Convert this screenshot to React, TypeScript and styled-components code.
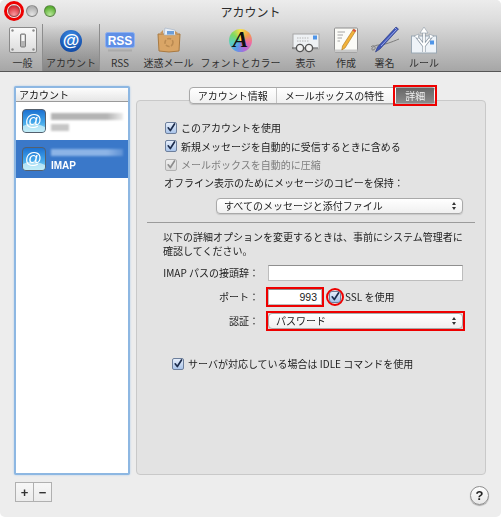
import React from 'react'
import styled, { createGlobalStyle, css } from 'styled-components'

const font = `"Noto Sans CJK JP", "Noto Sans", sans-serif`
const red = '#ee0000'

const Global = createGlobalStyle`
  html, body { margin: 0; padding: 0; background: #fff; }
  body { width: 501px; height: 517px; overflow: hidden; font-family: ${font}; color: #1c1c1c; }
  * { box-sizing: border-box; }
`

// red marker drawn over a control, square even when the control is rounded
const marked = css`
  position: relative;
  &::after {
    content: '';
    position: absolute;
    inset: -3px;
    border: 2.5px solid ${red};
    pointer-events: none;
  }
`

const Window = styled.div`
  width: 501px;
  height: 517px;
  background: #ededed;
  border-radius: 5px;
  overflow: hidden;
  display: flex;
  flex-direction: column;
  filter: blur(0.3px);
`

const Chrome = styled.header`
  height: 72px;
  flex: none;
  background: linear-gradient(#ececec 0%, #dcdcdc 30%, #bdbdbd 70%, #a6a6a6 100%);
  border-bottom: 1px solid #565656;
  display: flex;
  flex-direction: column;
`

const TitleBar = styled.div`
  height: 22px;
  display: flex;
  align-items: center;
  padding-left: 8px;
  gap: 8px;
`

const Title = styled.div`
  flex: 1;
  margin-right: 64px;
  text-align: center;
  font-size: 12px;
  color: #2b2b2b;
`

const Lights = styled.div`
  display: flex;
  gap: 6px;
`

const Light = styled.span<{ $c: string; $glow: string; $ring?: boolean }>`
  width: 12px;
  height: 12px;
  border-radius: 50%;
  border: 1px solid rgba(70, 70, 70, 0.45);
  background: radial-gradient(circle at 50% 85%, ${p => p.$glow} 0%, ${p => p.$c} 75%);
  ${p => p.$ring && `box-shadow: 0 0 0 1px #ededed, 0 0 0 4px ${red};`}
`

const Tools = styled.nav`
  flex: 1;
  margin-top: 2px;
  display: flex;
  padding-left: 3px;
`

const Tool = styled.div<{ $w: number; $active?: boolean }>`
  width: ${p => p.$w}px;
  flex: none;
  display: flex;
  flex-direction: column;
  align-items: center;
  justify-content: flex-start;
  ${p => p.$active && `
    background: linear-gradient(rgba(120,120,120,0) 0%, rgba(120,120,120,.35) 55%, rgba(90,90,90,.45) 100%);
    border-left: 1px solid #8d8d8d;
    border-right: 1px solid #8d8d8d;
  `}
`

const ToolIcon = styled.div<{ $drop?: number }>`
  height: 32px;
  padding-top: ${p => p.$drop ?? 0}px;
  display: flex;
  align-items: center;
  justify-content: center;
`

const ToolLabel = styled.span`
  font-size: 10px;
  line-height: 13px;
  margin-top: 0;
  white-space: nowrap;
  color: #303030;
`

const FontWheel = styled.div`
  width: 23px;
  height: 23px;
  border-radius: 50%;
  background: conic-gradient(#f7e04a, #f3a04a, #ef6aa0, #b06ad8, #5a9ae8, #5ad0c0, #7ed860, #f7e04a);
  display: flex;
  align-items: center;
  justify-content: center;
  font: italic bold 23px "Liberation Serif", serif;
  color: #111;
`

const Body = styled.main`
  flex: 1;
  display: flex;
  gap: 6px;
  padding: 14px 15px 0 14px;
`

const Sidebar = styled.aside`
  width: 116px;
  flex: none;
`

const List = styled.div`
  height: 389px;
  background: #fff;
  border: 2px solid #8db7e2;
  border-radius: 2px;
  box-shadow: 0 0 2px #a8c8ea;
`

const ListHead = styled.div`
  height: 14px;
  font-size: 10px;
  line-height: 13px;
  padding-left: 3px;
  background: linear-gradient(#fdfdfd, #e6e6e6);
  border-bottom: 1px solid #9a9a9a;
  color: #111;
`

const Account = styled.div<{ $selected?: boolean }>`
  height: 38px;
  display: flex;
  align-items: center;
  gap: 5px;
  padding-left: 6px;
  background: ${p => (p.$selected ? '#3a78c9' : '#fff')};
  color: #fff;
`

const AccountText = styled.div`
  display: flex;
  flex-direction: column;
  gap: 4px;
  padding-top: 1px;
`

const Blurred = styled.span<{ $w: number; $c: string; $fade?: string }>`
  display: block;
  width: ${p => p.$w}px;
  height: 7px;
  background: linear-gradient(90deg, ${p => p.$c} 78%, ${p => p.$fade ?? p.$c} 100%);
  filter: blur(1.3px);
`

const Proto = styled.span`
  font: bold 10px/11px "Liberation Sans", sans-serif;
`

const Right = styled.section`
  flex: 1;
  display: flex;
  flex-direction: column;
  align-items: center;
  width: 350px;
`

const Tabs = styled.div`
  position: relative;
  z-index: 1;
  margin-top: 1px;
  margin-left: 3px;
  height: 17px;
  display: flex;
  align-items: stretch;
  background: linear-gradient(#ffffff, #f0f0f0);
  border: 1px solid #a8a8a8;
  border-radius: 4px;
  font-size: 10px;
  line-height: 15px;
  box-shadow: 0 1px 1px rgba(0, 0, 0, 0.15);
`

const Tab = styled.div<{ $selected?: boolean; $sep?: boolean }>`
  padding: 0 ${p => (p.$selected ? 9 : 8)}px;
  ${p => p.$sep && 'border-right: 1px solid #c4c4c4;'}
  ${p => p.$selected && css`
    background: linear-gradient(#666666, #8a8a8a);
    color: #f2f2f2;
    margin-left: 4px;
    margin-right: 1px;
    ${marked}
  `}
`

const Panel = styled.div`
  margin-top: -4px;
  width: 350px;
  height: 375px;
  background: #e3e3e3;
  border: 1px solid #c9c9c9;
  border-radius: 4px;
  padding: 17.5px 10px 0 10px;
  font-size: 10px;
`

const CheckRow = styled.label<{ $dim?: boolean; $indent?: number }>`
  height: 18.5px;
  display: flex;
  align-items: center;
  gap: 4px;
  padding-left: ${p => p.$indent ?? 18}px;
  white-space: nowrap;
  color: ${p => (p.$dim ? '#7d7d7d' : '#1c1c1c')};
`

const Box = styled.span<{ $dim?: boolean }>`
  width: 12px;
  height: 12px;
  flex: none;
  border-radius: 2px;
  border: 1px solid ${p => (p.$dim ? '#b0b0b0' : '#6d7f9c')};
  background: ${p =>
    p.$dim ? 'linear-gradient(#eee,#d8d8d8)' : 'linear-gradient(#e6eefa,#a9c4ea)'};
  display: flex;
  align-items: center;
  justify-content: center;
`

const Line = styled.div`
  height: 18px;
  line-height: 18px;
  margin-bottom: 5.5px;
  padding-left: 17px;
  white-space: nowrap;
`

const Popup = styled.div<{ $w: number; $ml?: number; $hl?: boolean }>`
  width: ${p => p.$w}px;
  margin-left: ${p => p.$ml ?? 0}px;
  height: 16px;
  flex: none;
  display: flex;
  align-items: center;
  justify-content: space-between;
  padding: 0 6px 0 7px;
  background: linear-gradient(#ffffff, #f0f0f0);
  border: 1px solid #a9a9a9;
  border-radius: 4px;
  box-shadow: 0 1px 1px rgba(0, 0, 0, 0.12);
  ${p => p.$hl && marked}
`

const Arrows = styled.span`
  display: flex;
  flex-direction: column;
  gap: 2px;
  &::before, &::after {
    content: '';
    width: 0;
    height: 0;
    border-left: 2px solid transparent;
    border-right: 2px solid transparent;
  }
  &::before { border-bottom: 3px solid #333; }
  &::after { border-top: 3px solid #333; }
`

const Divider = styled.hr`
  margin: 8px 0 7px;
  border: 0;
  border-top: 1px solid #9b9b9b;
`

const Note = styled.p`
  margin: 0 0 7px;
  padding-left: 16px;
  line-height: 14px;
  white-space: nowrap;
`

const FieldGrid = styled.div`
  display: grid;
  grid-template-columns: 112px 1fr;
  column-gap: 9px;
  row-gap: 8px;
  align-items: center;
`

const FieldLabel = styled.div`
  text-align: right;
  white-space: nowrap;
`

const FieldRow = styled.div`
  display: flex;
  align-items: center;
  gap: 6px;
`

const Input = styled.div<{ $w: number; $hl?: boolean }>`
  width: ${p => p.$w}px;
  height: 16px;
  background: #fff;
  border: 1px solid #bdbdbd;
  border-top-color: #8f8f8f;
  text-align: right;
  padding-right: 4px;
  font: 10.5px/15px "Liberation Sans", sans-serif;
  ${p => p.$hl && marked}
`

const SslBox = styled(Box)`
  position: relative;
  border-radius: 3px;
  &::after {
    content: '';
    position: absolute;
    inset: -4px;
    border: 2px solid ${red};
    border-radius: 50%;
  }
`

const Ssl = styled.span`
  display: flex;
  align-items: center;
  gap: 4px;
  margin-left: 1px;
  white-space: nowrap;
`

const Idle = styled.div`
  margin-top: 26px;
`

const Foot = styled.footer`
  flex: 1;
  display: flex;
  align-items: flex-start;
  justify-content: space-between;
  padding: 7px 12px 0 15px;
`

const PlusMinus = styled.div`
  display: flex;
  width: 37px;
  height: 20px;
  border: 1px solid #b0b0b0;
  background: linear-gradient(#f7f7f7, #ececec);
`

const Sign = styled.span<{ $sep?: boolean }>`
  flex: 1;
  display: flex;
  align-items: center;
  justify-content: center;
  font: bold 13px/1 "Liberation Sans", sans-serif;
  color: #333;
  ${p => p.$sep && 'border-right: 1px solid #b0b0b0;'}
`

const Help = styled.span`
  width: 19px;
  height: 19px;
  margin-top: 4px;
  border-radius: 50%;
  border: 1px solid #8c8c8c;
  background: linear-gradient(#fdfdfd, #e8e8e8);
  box-shadow: 0 1px 1px rgba(0, 0, 0, 0.3);
  display: flex;
  align-items: center;
  justify-content: center;
  font: bold 13px/1 "Liberation Sans", sans-serif;
  color: #222;
`

const Tick = ({ dim }: { dim?: boolean }) => (
  <svg width="12" height="12" viewBox="0 0 12 12">
    <path
      d="M2.6 5.8 L5.2 9 L10.2 1.2"
      fill="none"
      stroke={dim ? '#8d8d8d' : '#1c2c4c'}
      strokeWidth="2"
      strokeLinecap="round"
      strokeLinejoin="round"
    />
  </svg>
)

const SwitchIcon = () => (
  <svg width="28" height="26" viewBox="0 0 28 26">
    <defs>
      <linearGradient id="sw" x1="0" y1="0" x2="0" y2="1">
        <stop offset="0" stopColor="#fbfbfb" />
        <stop offset="1" stopColor="#dcdcdc" />
      </linearGradient>
    </defs>
    <rect x=".5" y=".5" width="27" height="25" rx="1.5" fill="url(#sw)" stroke="#8a8a8a" />
    {[[3.5, 3.5], [24.5, 3.5], [3.5, 22.5], [24.5, 22.5]].map(([x, y]) => (
      <circle key={`${x}-${y}`} cx={x} cy={y} r="1.2" fill="#8c8c8c" />
    ))}
    <rect x="11.5" y="7" width="5" height="13" rx="1" fill="#b4b4b4" stroke="#7c7c7c" />
    <rect x="12.5" y="8" width="3" height="6" rx=".5" fill="#f6f6f6" />
  </svg>
)

const AtIcon = () => (
  <svg width="26" height="28" viewBox="0 0 26 28">
    <defs>
      <radialGradient id="at" cx=".5" cy=".3" r=".8">
        <stop offset="0" stopColor="#3f8fe8" />
        <stop offset="1" stopColor="#0b3f9a" />
      </radialGradient>
    </defs>
    <circle cx="13" cy="15" r="11" fill="url(#at)" />
    <text x="13" y="20" textAnchor="middle" fontSize="17" fontWeight="700" fontFamily="Liberation Sans" fill="#fff">@</text>
  </svg>
)

const RssIcon = () => (
  <svg width="30" height="20" viewBox="0 0 30 20">
    <rect x=".5" y=".5" width="29" height="15" rx="2" fill="#5f8fe6" stroke="#8eb0ee" />
    <text x="15" y="12.5" textAnchor="middle" fontSize="12" fontWeight="700" fontFamily="Liberation Sans" fill="#fff">RSS</text>
    <rect x="3" y="17.5" width="24" height="2" fill="#999" opacity=".5" />
  </svg>
)

const JunkIcon = () => (
  <svg width="26" height="26" viewBox="0 0 26 26">
    <path d="M2 7 L24 7 L23 24 Q13 26 3 24 Z" fill="#d9a566" stroke="#a87a42" />
    <path d="M8 8 L9 1 L19 3 L20 8 Z" fill="#e9eff7" stroke="#9fb0c4" strokeWidth=".6" />
    <rect x="11" y="4" width="7" height="3.5" fill="#6d9ed8" />
    <path d="M4 6 L7 3 L7 8 Z M22 6 L19 4 L19 8 Z" fill="#c9955a" />
    <circle cx="13" cy="15.5" r="4" fill="none" stroke="#bb8b52" strokeWidth="1.6" strokeDasharray="4 1.5" />
  </svg>
)

const GlassesIcon = () => (
  <svg width="30" height="20" viewBox="0 0 30 20">
    <rect x="2" y="1" width="26" height="15" fill="#eef1f4" stroke="#a8a8a8" />
    <rect x="22" y="2.5" width="4" height="4" fill="#4f95e8" />
    <path d="M6 5 H18 M6 8 H18" stroke="#b8b8b8" strokeWidth="1" strokeDasharray="1.5 1" />
    <circle cx="9" cy="15" r="3.6" fill="#f2f2f2" stroke="#555" strokeWidth="1.4" />
    <circle cx="18" cy="15" r="3.6" fill="#f2f2f2" stroke="#555" strokeWidth="1.4" />
    <path d="M12.6 15 H14.4 M5 15 H1 M22 15 H27" stroke="#555" strokeWidth="1.2" />
  </svg>
)

const ComposeIcon = () => (
  <svg width="24" height="26" viewBox="0 0 24 26">
    <rect x=".5" y="1" width="23" height="24" rx="1" fill="#fbfbf7" stroke="#8e8e8e" />
    <rect x=".5" y="22.5" width="23" height="2.5" fill="#c9c9c9" />
    <path d="M3.5 5 H11 M3.5 8 H9 M3.5 11 H8 M3.5 14 H6" stroke="#a4a4a4" />
    <path d="M19.5 2 L22 3.5 L11 21 L7.8 23 L8.5 19 Z" fill="#f2b23a" stroke="#a87418" strokeWidth=".6" />
    <path d="M19.5 2 L22 3.5 L21 5.2 L18.5 3.6 Z" fill="#d8504a" />
  </svg>
)

const SignIcon = () => (
  <svg width="30" height="28" viewBox="0 0 30 28">
    <path d="M1 21 C5 17 7 24 3 24 C0 24 3 19 9 19 C14 19 22 16 29 13" fill="none" stroke="#7c7c7c" strokeWidth="1" />
    <path d="M26 1 L28.5 3 L10 23 L5.5 26 L7.5 21 Z" fill="#3f55b8" stroke="#25357c" strokeWidth=".6" />
    <path d="M25 2 L26.5 3.5 L11 20" stroke="#98a8e8" strokeWidth="1" fill="none" />
  </svg>
)

const RulesIcon = () => (
  <svg width="26" height="28" viewBox="0 0 26 28">
    <rect x=".5" y="10" width="25" height="17" fill="#eef3f8" stroke="#9aa8b4" />
    <rect x="19" y="14.5" width="4" height="4" fill="#4f95e8" />
    <path d="M13 26 V6 M13 20 L6 11 M13 20 L20 11" stroke="#8c98a4" strokeWidth="3.2" fill="none" />
    <path d="M13 26 V6 M13 20 L6 11 M13 20 L20 11" stroke="#fff" strokeWidth="1.8" fill="none" />
    <path d="M13 1 L17 7 H9 Z M3 10 L8 8 L7 13 Z M23 10 L18 8 L19 13 Z" fill="#fff" stroke="#8c98a4" strokeWidth=".6" />
  </svg>
)

const MailIcon = ({ id }: { id: string }) => (
  <svg width="24" height="24" viewBox="0 0 24 24">
    <defs>
      <linearGradient id={id} x1="0" y1="0" x2="0" y2="1">
        <stop offset="0" stopColor="#1c6fd0" />
        <stop offset=".55" stopColor="#42a6ea" />
        <stop offset="1" stopColor="#8fe0f4" />
      </linearGradient>
    </defs>
    <rect x=".5" y=".5" width="23" height="23" rx="3.5" fill={`url(#${id})`} stroke="#55606e" />
    <path d="M1 17 Q10 12 23 18 V20 Q23 23 20 23 H4 Q1 23 1 20 Z" fill="#d8f4fa" opacity=".7" />
    <text x="11.5" y="17" textAnchor="middle" fontSize="17" fontFamily="Liberation Sans" fill="#fff">@</text>
  </svg>
)

export default function App() {
  return (
    <>
      <Global />
      <Window>
        <Chrome>
          <TitleBar>
            <Lights>
              <Light $c="#dc3038" $glow="#f79aa0" $ring />
              <Light $c="#b0b0b0" $glow="#e4e4e4" />
              <Light $c="#5aae32" $glow="#b8e89a" />
            </Lights>
            <Title>アカウント</Title>
          </TitleBar>
          <Tools>
            <Tool $w={39}>
              <ToolIcon><SwitchIcon /></ToolIcon>
              <ToolLabel>一般</ToolLabel>
            </Tool>
            <Tool $w={58} $active>
              <ToolIcon><AtIcon /></ToolIcon>
              <ToolLabel>アカウント</ToolLabel>
            </Tool>
            <Tool $w={40}>
              <ToolIcon $drop={3}><RssIcon /></ToolIcon>
              <ToolLabel>RSS</ToolLabel>
            </Tool>
            <Tool $w={57}>
              <ToolIcon><JunkIcon /></ToolIcon>
              <ToolLabel>迷惑メール</ToolLabel>
            </Tool>
            <Tool $w={87}>
              <ToolIcon><FontWheel>A</FontWheel></ToolIcon>
              <ToolLabel>フォントとカラー</ToolLabel>
            </Tool>
            <Tool $w={43}>
              <ToolIcon $drop={6}><GlassesIcon /></ToolIcon>
              <ToolLabel>表示</ToolLabel>
            </Tool>
            <Tool $w={38}>
              <ToolIcon><ComposeIcon /></ToolIcon>
              <ToolLabel>作成</ToolLabel>
            </Tool>
            <Tool $w={39}>
              <ToolIcon><SignIcon /></ToolIcon>
              <ToolLabel>署名</ToolLabel>
            </Tool>
            <Tool $w={40}>
              <ToolIcon><RulesIcon /></ToolIcon>
              <ToolLabel>ルール</ToolLabel>
            </Tool>
          </Tools>
        </Chrome>

        <Body>
          <Sidebar>
            <List>
              <ListHead>アカウント</ListHead>
              <Account>
                <MailIcon id="m1" />
                <AccountText>
                  <Blurred $w={72} $c="#b4b4b4" $fade="#ececec" />
                  <Blurred $w={18} $c="#c6c6c6" />
                </AccountText>
              </Account>
              <Account $selected>
                <MailIcon id="m2" />
                <AccountText>
                  <Blurred $w={72} $c="#8db4e6" $fade="#5d90d4" />
                  <Proto>IMAP</Proto>
                </AccountText>
              </Account>
            </List>
          </Sidebar>

          <Right>
            <Tabs>
              <Tab $sep>アカウント情報</Tab>
              <Tab>メールボックスの特性</Tab>
              <Tab $selected>詳細</Tab>
            </Tabs>
            <Panel>
              <CheckRow><Box><Tick /></Box>このアカウントを使用</CheckRow>
              <CheckRow><Box><Tick /></Box>新規メッセージを自動的に受信するときに含める</CheckRow>
              <CheckRow $dim><Box $dim><Tick dim /></Box>メールボックスを自動的に圧縮</CheckRow>
              <Line>オフライン表示のためにメッセージのコピーを保持：</Line>
              <Popup $w={247} $ml={69}>すべてのメッセージと添付ファイル<Arrows /></Popup>
              <Divider />
              <Note>
                以下の詳細オプションを変更するときは、事前にシステム管理者に
                <br />
                確認してください。
              </Note>
              <FieldGrid>
                <FieldLabel>IMAP パスの接頭辞：</FieldLabel>
                <Input $w={195} />
                <FieldLabel>ポート：</FieldLabel>
                <FieldRow>
                  <Input $w={54} $hl>993</Input>
                  <Ssl><SslBox><Tick /></SslBox>SSL を使用</Ssl>
                </FieldRow>
                <FieldLabel>認証：</FieldLabel>
                <Popup $w={195} $hl>パスワード<Arrows /></Popup>
              </FieldGrid>
              <Idle>
                <CheckRow $indent={25}><Box><Tick /></Box>サーバが対応している場合は IDLE コマンドを使用</CheckRow>
              </Idle>
            </Panel>
          </Right>
        </Body>

        <Foot>
          <PlusMinus>
            <Sign $sep>+</Sign>
            <Sign>−</Sign>
          </PlusMinus>
          <Help>?</Help>
        </Foot>
      </Window>
    </>
  )
}
